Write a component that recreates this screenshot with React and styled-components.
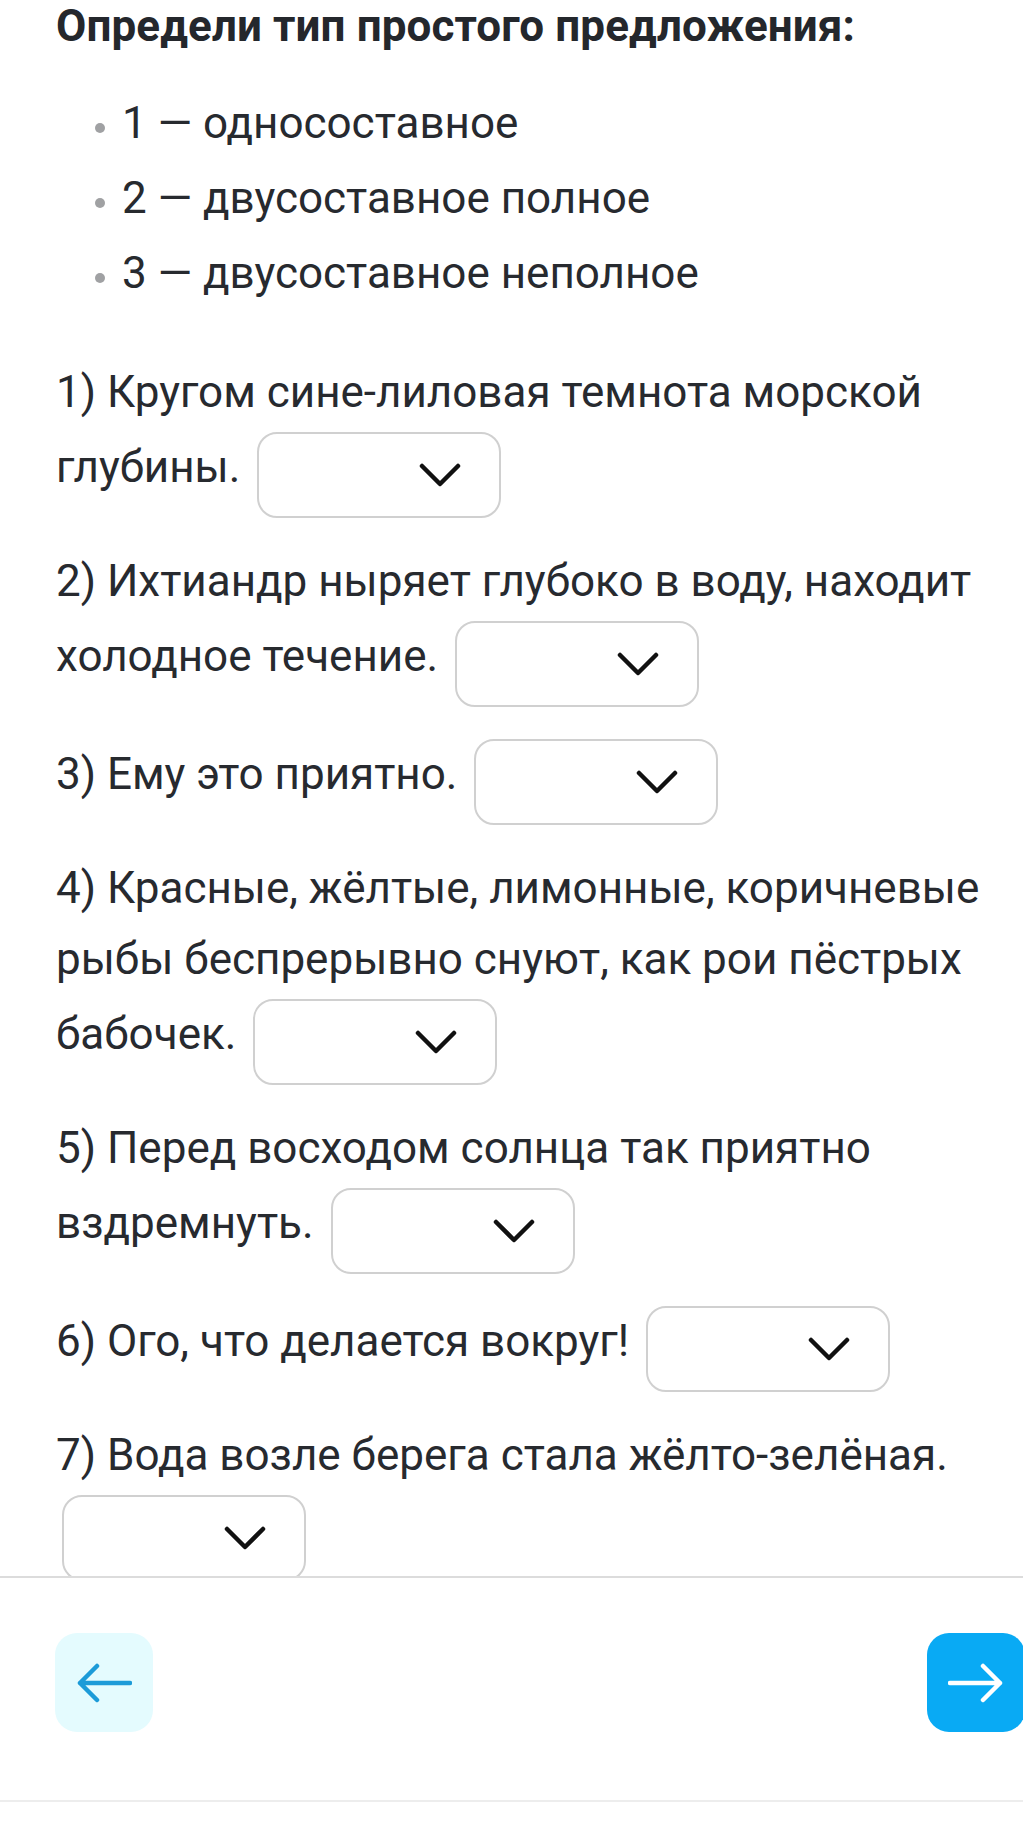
import React from "react";
import styled, { createGlobalStyle } from "styled-components";

const GlobalStyle = createGlobalStyle`
  html, body {
    margin: 0;
    padding: 0;
    background: #ffffff;
  }
  body {
    font-family: Roboto, "Noto Sans", "Liberation Sans", sans-serif;
    color: #272a2f;
  }
`;

const Page = styled.div`
  width: 1023px;
  height: 1823px;
  overflow: hidden;
  background: #ffffff;
  display: flex;
  flex-direction: column;
`;

const Content = styled.div`
  height: 1576px;
  flex: none;
  overflow: hidden;
  padding: 0 40px 0 56px;
  box-sizing: border-box;
`;

const Title = styled.h1`
  margin: 0;
  font-size: 44px;
  line-height: 52px;
  font-weight: 700;
  letter-spacing: 0.1px;
  color: #24272c;
`;

const Legend = styled.ul`
  list-style: none;
  margin: 34px 0 0;
  padding: 0 0 0 39px;
`;

const LegendItem = styled.li`
  display: flex;
  align-items: center;
  gap: 17px;
  font-size: 44px;
  line-height: 75px;

  &::before {
    content: "";
    flex: none;
    width: 10px;
    height: 10px;
    margin-top: 8px;
    border-radius: 50%;
    background: #a0a1a3;
  }
`;

const Task = styled.p`
  margin: 0 0 28px;
  font-size: 44px;
  line-height: 71px;

  &:first-of-type {
    margin-top: 46px;
  }
`;

const Select = styled.span`
  display: inline-block;
  position: relative;
  overflow: hidden;
  box-sizing: border-box;
  width: 244px;
  height: 86px;
  margin: 4px 0 0 ${({ $gap }) => $gap}px;
  border: 2px solid #d0d0d0;
  border-radius: 20px;
  background: #fff;
  vertical-align: -36px;
`;

const Chevron = styled.svg`
  position: absolute;
  right: 38px;
  top: 50%;
  margin-top: -12px;
  width: 42px;
  height: 24px;
`;

const Footer = styled.div`
  flex: none;
  height: 226px;
  box-sizing: border-box;
  border-top: 2px solid #dcdcdc;
  border-bottom: 2px solid #ededed;
  padding: 55px 0 0 55px;
  display: flex;
  justify-content: space-between;
  align-items: flex-start;
`;

const NavButton = styled.button`
  width: 98px;
  height: 99px;
  border: none;
  padding: 0;
  border-radius: 22px;
  display: flex;
  align-items: center;
  justify-content: center;
  background: ${({ $primary }) => ($primary ? "#09aaf4" : "#e4fbfe")};
  margin-right: ${({ $primary }) => ($primary ? "-2px" : "0")};
`;

const DropDown = ({ gap = 6 }) => (
  <Select $gap={gap}>
    <Chevron viewBox="0 0 42 24" fill="none">
      <path
        d="M3 3 L21 21 L39 3"
        stroke="#111"
        strokeWidth="4.5"
        strokeLinecap="round"
        strokeLinejoin="round"
      />
    </Chevron>
  </Select>
);

const Arrow = ({ dir, color }) => (
  <svg width="56" height="40" viewBox="0 0 56 40" fill="none">
    {dir === "left" ? (
      <path
        d="M54 20 H4 M21 3 L4 20 L21 37"
        stroke={color}
        strokeWidth="4.5"
        strokeLinecap="round"
        strokeLinejoin="round"
      />
    ) : (
      <path
        d="M2 20 H52 M35 3 L52 20 L35 37"
        stroke={color}
        strokeWidth="4.5"
        strokeLinecap="round"
        strokeLinejoin="round"
      />
    )}
  </svg>
);

const tasks = [
  "1) Кругом сине-лиловая темнота морской глубины.",
  "2) Ихтиандр ныряет глубоко в воду, находит холодное течение.",
  "3) Ему это приятно.",
  "4) Красные, жёлтые, лимонные, коричневые рыбы беспрерывно снуют, как рои пёстрых бабочек.",
  "5) Перед восходом солнца так приятно вздремнуть.",
  "6) Ого, что делается вокруг!",
  "7) Вода возле берега стала жёлто-зелёная.",
];

export default function App() {
  return (
    <Page>
      <GlobalStyle />
      <Content>
        <Title>Определи тип простого предложения:</Title>
        <Legend>
          <LegendItem>1 — односоставное</LegendItem>
          <LegendItem>2 — двусоставное полное</LegendItem>
          <LegendItem>3 — двусоставное неполное</LegendItem>
        </Legend>
        {tasks.map((t) => (
          <Task key={t}>
            {t} <DropDown />
          </Task>
        ))}
      </Content>
      <Footer>
        <NavButton aria-label="Назад">
          <Arrow dir="left" color="#1c9bd8" />
        </NavButton>
        <NavButton $primary aria-label="Далее">
          <Arrow dir="right" color="#ffffff" />
        </NavButton>
      </Footer>
    </Page>
  );
}
